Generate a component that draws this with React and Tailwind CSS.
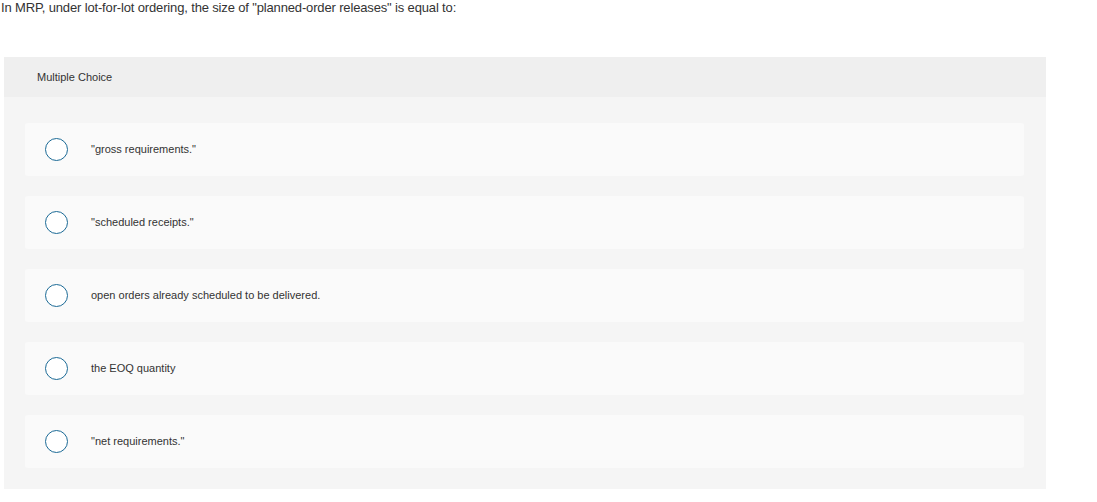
export default function App() {
  const options = [
    '"gross requirements."',
    '"scheduled receipts."',
    'open orders already scheduled to be delivered.',
    'the EOQ quantity',
    '"net requirements."',
  ];
  return (
    <div className="w-[1097px] h-[502px] bg-white text-[#333333]" style={{ fontFamily: '"Liberation Sans", Arial, sans-serif' }}>
      <div className="text-[13px] leading-[16px] pl-[1px] tracking-[-0.15px]">
        In MRP, under lot-for-lot ordering, the size of "planned-order releases" is equal to:
      </div>
      <div className="ml-[4px] mt-[41px] w-[1042px] bg-[#f5f5f5]">
        <div className="h-[40px] bg-[#efefef] flex items-center pl-[33px] text-[11px]">
          Multiple Choice
        </div>
        <div className="pt-[26px] pb-[21px] pl-[21px] pr-[22px] flex flex-col gap-[20px]">
          {options.map((o, i) => (
            <div key={i} className="h-[53px] bg-[#fafafa] rounded-[3px] flex items-center pl-[20px]">
              <div className="w-[23px] h-[23px] rounded-full border-[1.5px] border-[#1b6a96] bg-white shrink-0" />
              <div className="ml-[23px] text-[11px]">{o}</div>
            </div>
          ))}
        </div>
      </div>
    </div>
  );
}
